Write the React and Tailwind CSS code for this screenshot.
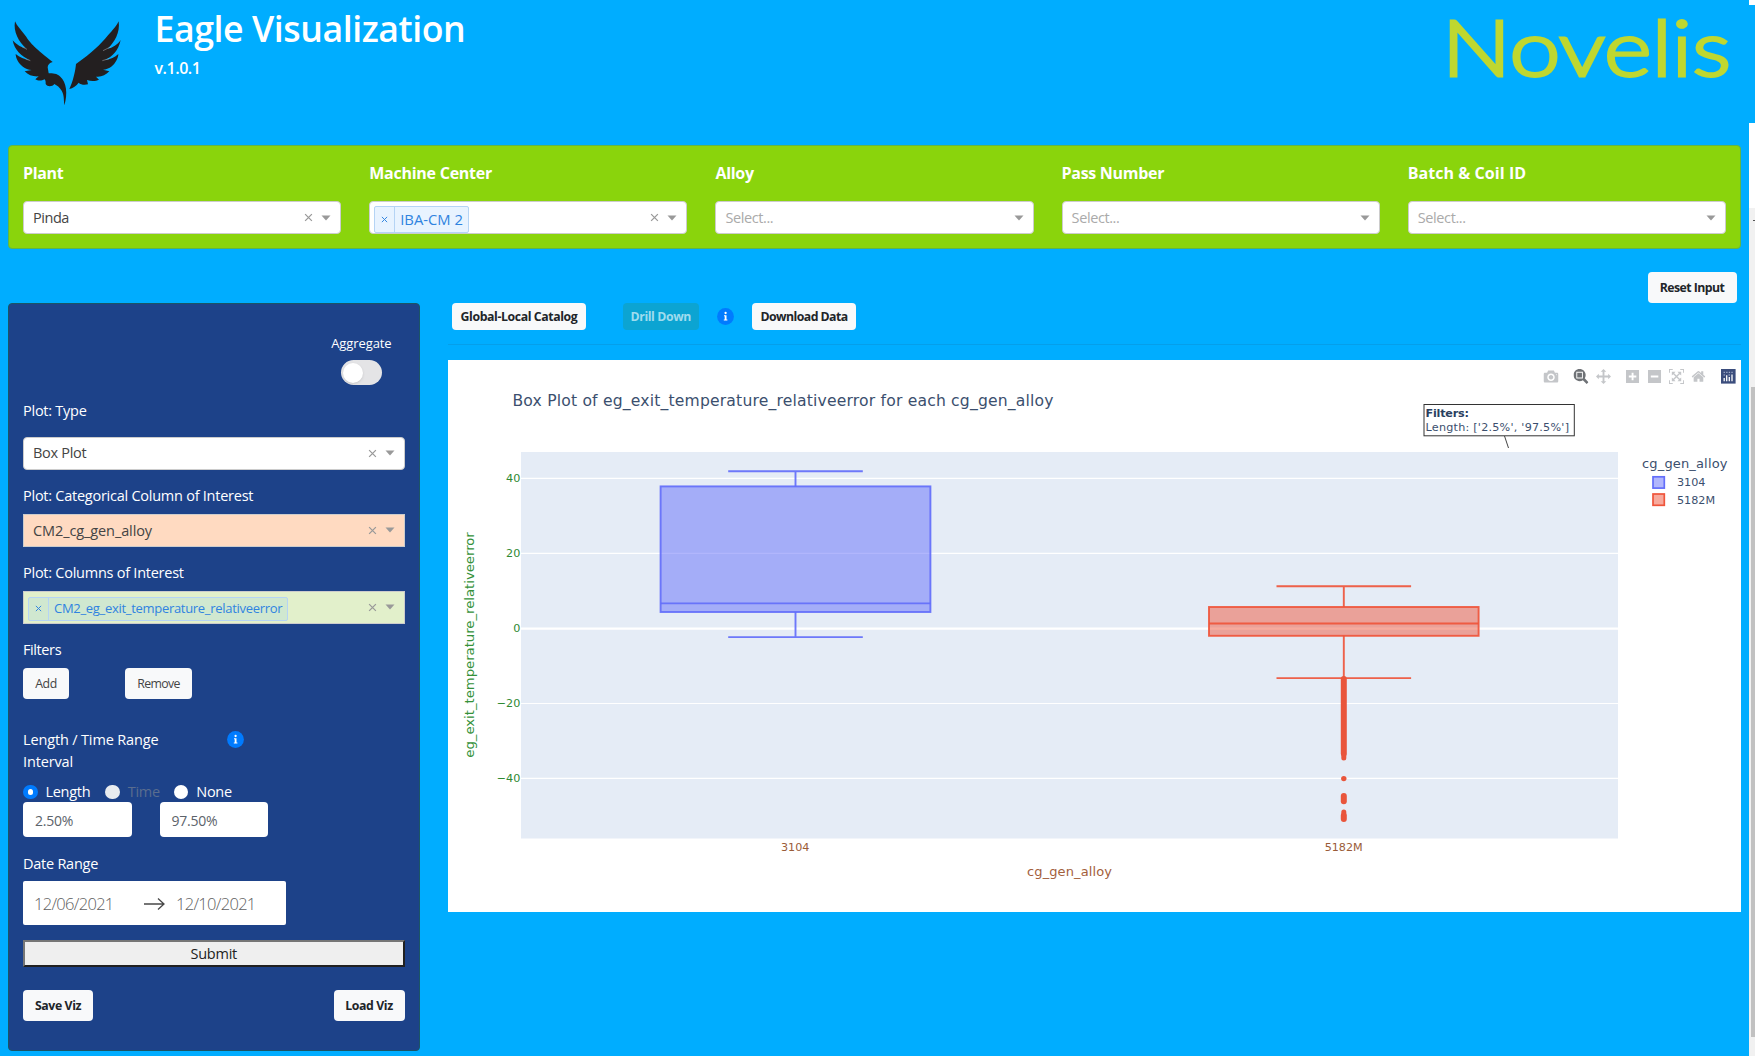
import clsx from "clsx";

function Caret() {
  return (
    <svg className="h-[6px] w-[10px] shrink-0" viewBox="0 0 10 6">
      <path d="M0.5 0.5H9.5L5 5.5Z" fill="#999" />
    </svg>
  );
}

function Cross({ className }) {
  return (
    <svg className={className} viewBox="0 0 8 8">
      <path d="M1 1L7 7M7 1L1 7" stroke="currentColor" strokeWidth="1.1" fill="none" />
    </svg>
  );
}

function Select({ value, tag, className, tagClass, textClass }) {
  return (
    <div className={clsx("flex h-[33px] items-center border border-[#ccc] pr-[9px] pl-[9px] text-[14.5px]", className)}>
      {tag ? (
        <div className={clsx("-ml-[5px] flex shrink-0 items-stretch rounded-[2px] border border-[#b5d4f5] text-[#2f83e0]", tagClass)}>
          <span className="flex w-[20px] items-center justify-center border-r border-[#b5d4f5]">
            <Cross className="h-[7px] w-[7px]" />
          </span>
          <span className="flex items-center px-[5px] whitespace-nowrap">{tag}</span>
        </div>
      ) : (
        <span className={clsx("whitespace-nowrap", value ? "text-[#444]" : "tracking-[-0.4px] text-[#aaa]", textClass)}>
          {value || "Select..."}
        </span>
      )}
      <span className="grow" />
      {(value || tag) && <Cross className="mr-[8px] h-[9px] w-[9px] text-[#999]" />}
      <Caret />
    </div>
  );
}

function Button({ children, className }) {
  return (
    <button className={clsx("flex items-center justify-center rounded-[4px] bg-[#f8f9fa] pt-[2px] text-[12.3px] whitespace-nowrap", className)}>
      {children}
    </button>
  );
}

function Info({ className }) {
  return (
    <svg className={clsx("h-[17px] w-[17px] shrink-0", className)} viewBox="0 0 17 17">
      <circle cx="8.5" cy="8.5" r="8.4" fill="#007bff" />
      <circle cx="8.6" cy="5" r="1.15" fill="#fff" />
      <path d="M7 7.2H9.5V11.4H10.4V12.6H6.8V11.4H7.7V8.3H7Z" fill="#fff" />
    </svg>
  );
}

function EagleLogo() {
  return (
    <svg className="mt-[10px] ml-[5px] h-[105px] w-[125px]" viewBox="0 0 375 315">
      <g fill="#231f20">
        <path d="M30 34C36 48 48 60 62 78C76 100 92 116 143 156C134 158 128 164 128 172L131 190C143 190 156 190 166 200C184 216 189 250 178 286C176 270 178 256 170 242C164 232 156 226 148 222C142 230 128 232 122 222C122 216 122 212 119 208C108 214 98 212 91 208L101 199C84 200 70 196 59 184L80 180C60 178 44 164 38 152C34 146 32 138 32 132C44 142 58 148 74 150C50 140 28 120 23 91C36 106 52 114 62 114C42 96 24 66 30 34Z" />
        <path d="M341 34C336 46 322 62 309 76C286 104 262 128 213 162C211 184 204 214 193 237C204 234 214 228 221 218C227 224 238 226 249 223C248 218 247 214 246 210C258 214 272 214 282 209L273 200C288 202 302 196 313 184L294 179C312 178 326 168 335 150C338 144 340 138 340 132C330 142 316 148 300 150C322 140 340 122 347 90C338 104 322 114 308 116C328 98 346 68 341 34Z" />
      </g>
      <g stroke="#a9a9ad" strokeWidth="1.6" fill="none">
        <path d="M52 111L66 118M62 147L76 152M294 122L318 110M292 152L312 146" />
      </g>
    </svg>
  );
}

const MODEBAR = [
  { x: 1095.5, w: 1000, c: "#c4c6c9", d: "m500 450c-83 0-150-67-150-150 0-83 67-150 150-150 83 0 150 67 150 150 0 83-67 150-150 150z m400 150h-120c-16 0-34 13-39 29l-31 93c-6 15-23 28-40 28h-340c-16 0-34-13-39-28l-31-94c-6-15-23-28-40-28h-120c-55 0-100-45-100-100v-450c0-55 45-100 100-100h800c55 0 100 45 100 100v450c0 55-45 100-100 100z m-400-550c-138 0-250 112-250 250 0 138 112 250 250 250 138 0 250-112 250-250 0-138-112-250-250-250z m365 380c-19 0-35 16-35 35 0 19 16 35 35 35 19 0 35-16 35-35 0-19-16-35-35-35z" },
  { x: 1125.5, w: 1000, c: "#6f7276", d: "m1000-25l-250 251c40 63 63 138 63 218 0 224-182 406-407 406-224 0-406-182-406-406s183-406 407-406c80 0 155 22 218 62l250-250 125 125z m-812 250l0 438 437 0 0-438-437 0z m62 375l313 0 0-312-313 0 0 312z" },
  { x: 1148, w: 1000, c: "#c4c6c9", d: "m1000 350l-187 188 0-125-250 0 0 250 125 0-188 187-187-187 125 0 0-250-250 0 0 125-188-188 186-187 0 125 252 0 0-250-125 0 187-188 188 188-125 0 0 250 250 0 0-126 187 188z" },
  { x: 1178, w: 875, c: "#c4c6c9", d: "m1 787l0-875 875 0 0 875-875 0z m687-500l-187 0 0-187-125 0 0 187-188 0 0 125 188 0 0 187 125 0 0-187 187 0 0-125z" },
  { x: 1200, w: 875, c: "#c4c6c9", d: "m0 788l0-876 876 0 0 876-876 0z m688-500l-500 0 0 125 500 0 0-125z" },
  { x: 1221, w: 1000, c: "#c4c6c9", d: "m250 850l-187 0-63 0 0-62 0-188 63 0 0 188 187 0 0 62z m688 0l-188 0 0-62 188 0 0-188 62 0 0 188 0 62-62 0z m-875-938l0 188-63 0 0-188 0-62 63 0 187 0 0 62-187 0z m875 188l0-188-188 0 0-62 188 0 62 0 0 62 0 188-62 0z m-125 188l-1 0-93-94-156 156 156 156 92-93 2 0 0 250-250 0 0-2 93-92-156-156-156 156 94 92 0 2-250 0 0-250 0 0 93 93 157-156-157-156-93 94 0 0 0-250 250 0 0 0-94 93 156 157 156-157-93-93 0 0 250 0 0 250z" },
  { x: 1243.5, w: 928, c: "#c4c6c9", d: "m786 296v-267q0-15-11-26t-25-10h-214v214h-143v-214h-214q-15 0-25 10t-11 26v267q0 1 0 2t0 2l321 264 321-264q1-1 1-4z m124 39l-34-41q-5-5-12-6h-2q-7 0-12 3l-386 322-386-322q-7-4-13-4-7 2-12 7l-35 41q-4 5-3 13t6 12l401 334q18 15 42 15t43-15l136-114v109q0 8 5 13t13 5h107q8 0 13-5t5-13v-227l122-102q5-5 6-12t-4-13z" },
];

const GRID = [
  { y: 118.3, label: "40", w: 1.2 },
  { y: 193.3, label: "20", w: 1.2 },
  { y: 268.6, label: "0", w: 2.2 },
  { y: 343.5, label: "−20", w: 1.2 },
  { y: 418.4, label: "−40", w: 1.2 },
];

const BOXES = [
  { c: "#636efa", left: 212.6, right: 482.4, mid: 347.5, cap: 67.3, top: 111.2, wTop: 126.4, wBot: 252, median: 243.4, bottom: 277.1 },
  { c: "#ef553b", left: 761, right: 1030.6, mid: 895.8, cap: 67.3, top: 226.2, wTop: 247, wBot: 275.8, median: 263.5, bottom: 318.1 },
];

// Runs of overlapping outlier markers: first centre, last centre, width
const OUTLIERS = [
  [319, 393.5, 6],
  [395, 398, 5],
  [418.6, 418.6, 5.4],
  [436, 441.2, 6],
  [452, 453, 5],
  [455.5, 459, 6],
];

function Chart() {
  return (
    <svg className="block h-[552px] w-[1293px] bg-white" viewBox="0 0 1293 552" fontFamily="'DejaVu Sans', Verdana, sans-serif">
      <text x="64.5" y="45.5" fontSize="15.6" fill="#3b4f6e" textLength="541">
        Box Plot of eg_exit_temperature_relativeerror for each cg_gen_alloy
      </text>

      {MODEBAR.map((m) => (
        <svg key={m.x} x={m.x} y="9" width={(m.w * 15) / 1000} height="15" viewBox={`0 0 ${m.w} 1000`}>
          <path d={m.d} fill={m.c} transform="matrix(1 0 0 -1 0 850)" />
        </svg>
      ))}
      <g>
        <rect x="1273" y="9" width="14.6" height="14.6" fill="#3b4d7c" />
        <path d="M1276.2 18V21.3M1278.7 15.3V21.3M1281.3 17V21.3M1284 14.5V21.3" stroke="#fff" strokeWidth="1.3" />
        <path d="M1275.6 12.3H1285.2M1275.6 15H1277M1280.6 15H1282" stroke="#b9c3dd" strokeWidth="1" strokeDasharray="1.3 1.3" />
      </g>

      <rect x="73" y="92" width="1097" height="386.5" fill="#e5ecf6" />
      {GRID.map((g) => (
        <g key={g.label}>
          <path d={`M73 ${g.y}H1170`} stroke="#fff" strokeWidth={g.w} />
          <text x="72.3" y={g.y + 3.8} fontSize="11.2" fill="#2f8a33" textAnchor="end">{g.label}</text>
        </g>
      ))}

      {BOXES.map((b) => (
        <g key={b.c} stroke={b.c} strokeWidth="1.9" fill="none" strokeOpacity="0.92">
          <rect x={b.left} y={b.wTop} width={b.right - b.left} height={b.wBot - b.wTop} fill={b.c} fillOpacity="0.5" />
          <path d={`M${b.left} ${b.median}H${b.right}`} />
          <path d={`M${b.mid} ${b.wTop}V${b.top}M${b.mid - b.cap} ${b.top}h${b.cap * 2}`} />
          <path d={`M${b.mid} ${b.wBot}V${b.bottom}M${b.mid - b.cap} ${b.bottom}h${b.cap * 2}`} />
        </g>
      ))}
      {OUTLIERS.map(([a, z, w]) => (
        <path key={a} d={`M895.8 ${a}V${z + 0.01}`} stroke="#e9553b" strokeWidth={w} strokeLinecap="round" />
      ))}

      <g fontSize="11.2" fill="#9a5c38" textAnchor="middle">
        <text x="347.2" y="490.6">3104</text>
        <text x="895.7" y="490.6">5182M</text>
      </g>
      <text x="579" y="516" fontSize="13" fill="#a3603c" textLength="85">cg_gen_alloy</text>
      <text transform="translate(26 397.7) rotate(-90)" fontSize="12.6" fill="#34913a" textLength="225.5" lengthAdjust="spacingAndGlyphs">
        eg_exit_temperature_relativeerror
      </text>

      <path d="M1056.5 76L1060.5 88" stroke="#444" strokeWidth="1" />
      <rect x="976" y="44.5" width="150.3" height="31.3" fill="#fff" stroke="#333" />
      <text x="977.5" y="56.7" fontSize="11.2" fontWeight="700" fill="#2a3f5f" textLength="43.5">Filters:</text>
      <text x="977.5" y="71.2" fontSize="11.2" fill="#3b4f6e" textLength="143.5">Length: ['2.5%', '97.5%']</text>

      <text x="1194" y="108" fontSize="13" fill="#3b4f6e" textLength="85.5">cg_gen_alloy</text>
      <rect x="1205" y="116.8" width="11.3" height="11.3" fill="#636efa" fillOpacity="0.5" stroke="#636efa" strokeWidth="1.7" />
      <rect x="1205" y="134" width="11.3" height="11.3" fill="#ef553b" fillOpacity="0.5" stroke="#ef553b" strokeWidth="1.7" />
      <g fontSize="11.2" fill="#3b4f6e">
        <text x="1229" y="126">3104</text>
        <text x="1229" y="143.5">5182M</text>
      </g>
    </svg>
  );
}

const FILTERS = [
  { label: "Plant", value: "Pinda", track: "tracking-[-0.35px]" },
  { label: "Machine Center", tag: "IBA-CM 2", track: "tracking-[-0.25px]" },
  { label: "Alloy", track: "tracking-[-0.3px]" },
  { label: "Pass Number", track: "tracking-[-0.3px]" },
  { label: "Batch & Coil ID", track: "tracking-[0.05px]" },
];

function FilterBar() {
  return (
    <section className="ml-[8px] grid h-[104px] w-[1733px] grid-cols-5 gap-[28px] rounded-[4px] border border-[#5fb548] bg-[#8ad40c] px-[14px] pt-[15px]">
      {FILTERS.map((f) => (
        <div key={f.label}>
          <div className={clsx("h-[40px] text-[16px] leading-[24px] font-bold text-white", f.track)}>{f.label}</div>
          <Select value={f.value} tag={f.tag} className="rounded-[4px] bg-white" textClass={f.value && "tracking-[-0.45px]"} tagClass="mt-[4px] h-[27px] bg-[#e8f3ff] text-[14.8px]" />
        </div>
      ))}
    </section>
  );
}

function Radio({ label, checked, disabled, className }) {
  return (
    <span className={clsx("flex items-center", className)}>
      <span className={clsx("mr-[8px] flex size-[14.5px] items-center justify-center rounded-full", checked ? "bg-[#007bff]" : disabled ? "bg-[#e9ecef]" : "bg-white")}>
        {checked && <span className="size-[5.5px] rounded-full bg-white" />}
      </span>
      <span className={clsx("text-[14.5px] tracking-[-0.3px]", disabled ? "text-[#5a6d8f]" : "text-white")}>{label}</span>
    </span>
  );
}

function Sidebar() {
  return (
    <aside className="ml-[8px] h-[748px] w-[411.5px] rounded-[4px] border border-[#1a5566] bg-[#1d4289] px-[14px] text-[14.5px] tracking-[-0.25px] text-white">
      <div className="flex h-[93px] justify-end pt-[29px] pr-[13px]">
        <div className="flex flex-col items-center">
          <span className="text-[13px] leading-[20px] tracking-[-0.1px]">Aggregate</span>
          <span className="mt-[7px] flex h-[25px] w-[41px] items-center rounded-full bg-[#e4e4e6] pl-[2px]">
            <span className="size-[20px] rounded-full bg-white shadow" />
          </span>
        </div>
      </div>
      <div className="h-[39.5px] pt-[3px] leading-[22px]">Plot: Type</div>
      <Select value="Box Plot" className="rounded-[4px] bg-white" textClass="tracking-[-0.3px]" />
      <div className="h-[44px] pt-[15px] leading-[22px]">Plot: Categorical Column of Interest</div>
      <Select value="CM2_cg_gen_alloy" className="bg-[#ffdac1]" textClass="tracking-[-0.1px] pt-px" />
      <div className="h-[44px] pt-[15px] leading-[22px]">Plot: Columns of Interest</div>
      <Select tag="CM2_eg_exit_temperature_relativeerror" className="bg-[#e2f0cb]" tagClass="mt-[3px] h-[24px] bg-[#d0e8d0] text-[13px] tracking-[-0.3px]" />
      <div className="h-[44px] pt-[15px] leading-[22px] tracking-[-0.4px]">Filters</div>
      <div className="flex gap-[56px]">
        <Button className="h-[31px] w-[46px] tracking-[-0.5px] text-[#444]">Add</Button>
        <Button className="h-[31px] w-[67px] tracking-[-0.65px] text-[#444]">Remove</Button>
      </div>
      <div className="flex h-[84px] pt-[30px]">
        <div className="w-[170px] leading-[22px] tracking-[-0.15px]">Length / Time Range Interval</div>
        <Info className="mt-[2.5px] ml-[34px]" />
      </div>
      <div className="flex h-[19px] items-center">
        <Radio label="Length" checked />
        <Radio label="Time" disabled className="ml-[15px]" />
        <Radio label="None" className="ml-[14px]" />
      </div>
      <div className="flex gap-[28px] text-[14px] text-[#5c636a]">
        <div className="flex h-[35px] w-[108.5px] items-center rounded-[4px] bg-white pt-[3px] pl-[12px]">2.50%</div>
        <div className="flex h-[35px] w-[108.5px] items-center rounded-[4px] bg-white pt-[3px] pl-[12px]">97.50%</div>
      </div>
      <div className="h-[44px] pt-[16px] leading-[22px]">Date Range</div>
      <div className="flex h-[44px] w-[263px] items-center rounded-[2px] bg-white pt-[3px] pl-[11px] text-[16.5px] font-light tracking-[-0.7px] text-[#606060]">
        <span className="w-[110px]">12/06/2021</span>
        <svg className="mr-[11px] h-[14px] w-[21px] shrink-0" viewBox="0 0 21 14">
          <path d="M0 7H20M14 1.5L20 7L14 12.5" stroke="#484848" strokeWidth="1.3" fill="none" />
        </svg>
        <span>12/10/2021</span>
      </div>
      <button className="mt-[15px] flex h-[27.5px] w-full items-center justify-center border-2 border-t-[#767676] border-r-[#212121] border-b-[#212121] border-l-[#767676] bg-[#efefef] pt-px text-[14.5px] tracking-[-0.25px] text-[#222]">
        Submit
      </button>
      <div className="mt-[22.5px] flex justify-between font-bold text-[#212529]">
        <Button className="h-[31px] w-[70px] tracking-[-0.4px]">Save Viz</Button>
        <Button className="h-[31px] w-[71px] tracking-[-0.4px]">Load Viz</Button>
      </div>
    </aside>
  );
}

export default function App() {
  return (
    <div className="flex h-[1056px] w-[1755px] overflow-hidden bg-[#00adff] font-['Open_Sans','Noto_Sans',sans-serif]">
      <div className="w-[1748.5px] shrink-0">
        <header className="flex h-[145px]">
          <EagleLogo />
          <div className="ml-[24.5px] text-white">
            <h1 className="h-[55px] pt-[3px] text-[35.7px] leading-[50px] font-semibold tracking-[-0.45px] whitespace-nowrap">Eagle Visualization</h1>
            <div className="text-[16px] leading-[26px] font-semibold tracking-[-0.45px]">v.1.0.1</div>
          </div>
          <span className="grow" />
          <svg className="mr-[8px] h-[120px] w-[310px]" viewBox="0 0 310 120">
            <text x="11" y="76" fontFamily="Lato" fontWeight="300" fontSize="77" fill="#bfd730" stroke="#bfd730" strokeWidth="3" textLength="289" lengthAdjust="spacingAndGlyphs">Novelis</text>
          </svg>
        </header>
        <FilterBar />
        <div className="flex h-[54px] justify-end pt-[22.5px] pr-[12px]">
          <Button className="h-[31.5px] w-[89px] font-bold tracking-[-0.55px] text-[#212529]">Reset Input</Button>
        </div>
        <div className="flex">
          <Sidebar />
          <main className="ml-[28px] w-[1293px]">
            <div className="flex h-[41px] items-start pl-[4.5px] font-bold text-[#212529]">
              <Button className="h-[27px] w-[134px] tracking-[-0.4px]">Global-Local Catalog</Button>
              <Button className="ml-[36.5px] h-[27px] w-[76.5px] bg-[#0ca4d2]! tracking-[-0.4px] text-[#9fdcee]">Drill Down</Button>
              <Info className="mt-[4.5px] ml-[18px]" />
              <Button className="ml-[18px] h-[27px] w-[104px] tracking-[-0.55px]">Download Data</Button>
            </div>
            <hr className="mb-[15px] border-0 border-t border-[#059fea]" />
            <Chart />
          </main>
        </div>
      </div>
      <div className="flex grow flex-col bg-[#f1f1f1]">
        <div className="h-[4.5px] bg-white" />
        <div className="h-[118.5px] bg-[#00adff]" />
        <div className="h-[85px] bg-white" />
        <div className="flex h-[179px] justify-end pt-[12px]"><span className="h-px w-[2px] bg-[#555]" /></div>
        <div className="ml-[2px] h-[650px] bg-[#c1c1c1]" />
      </div>
    </div>
  );
}
